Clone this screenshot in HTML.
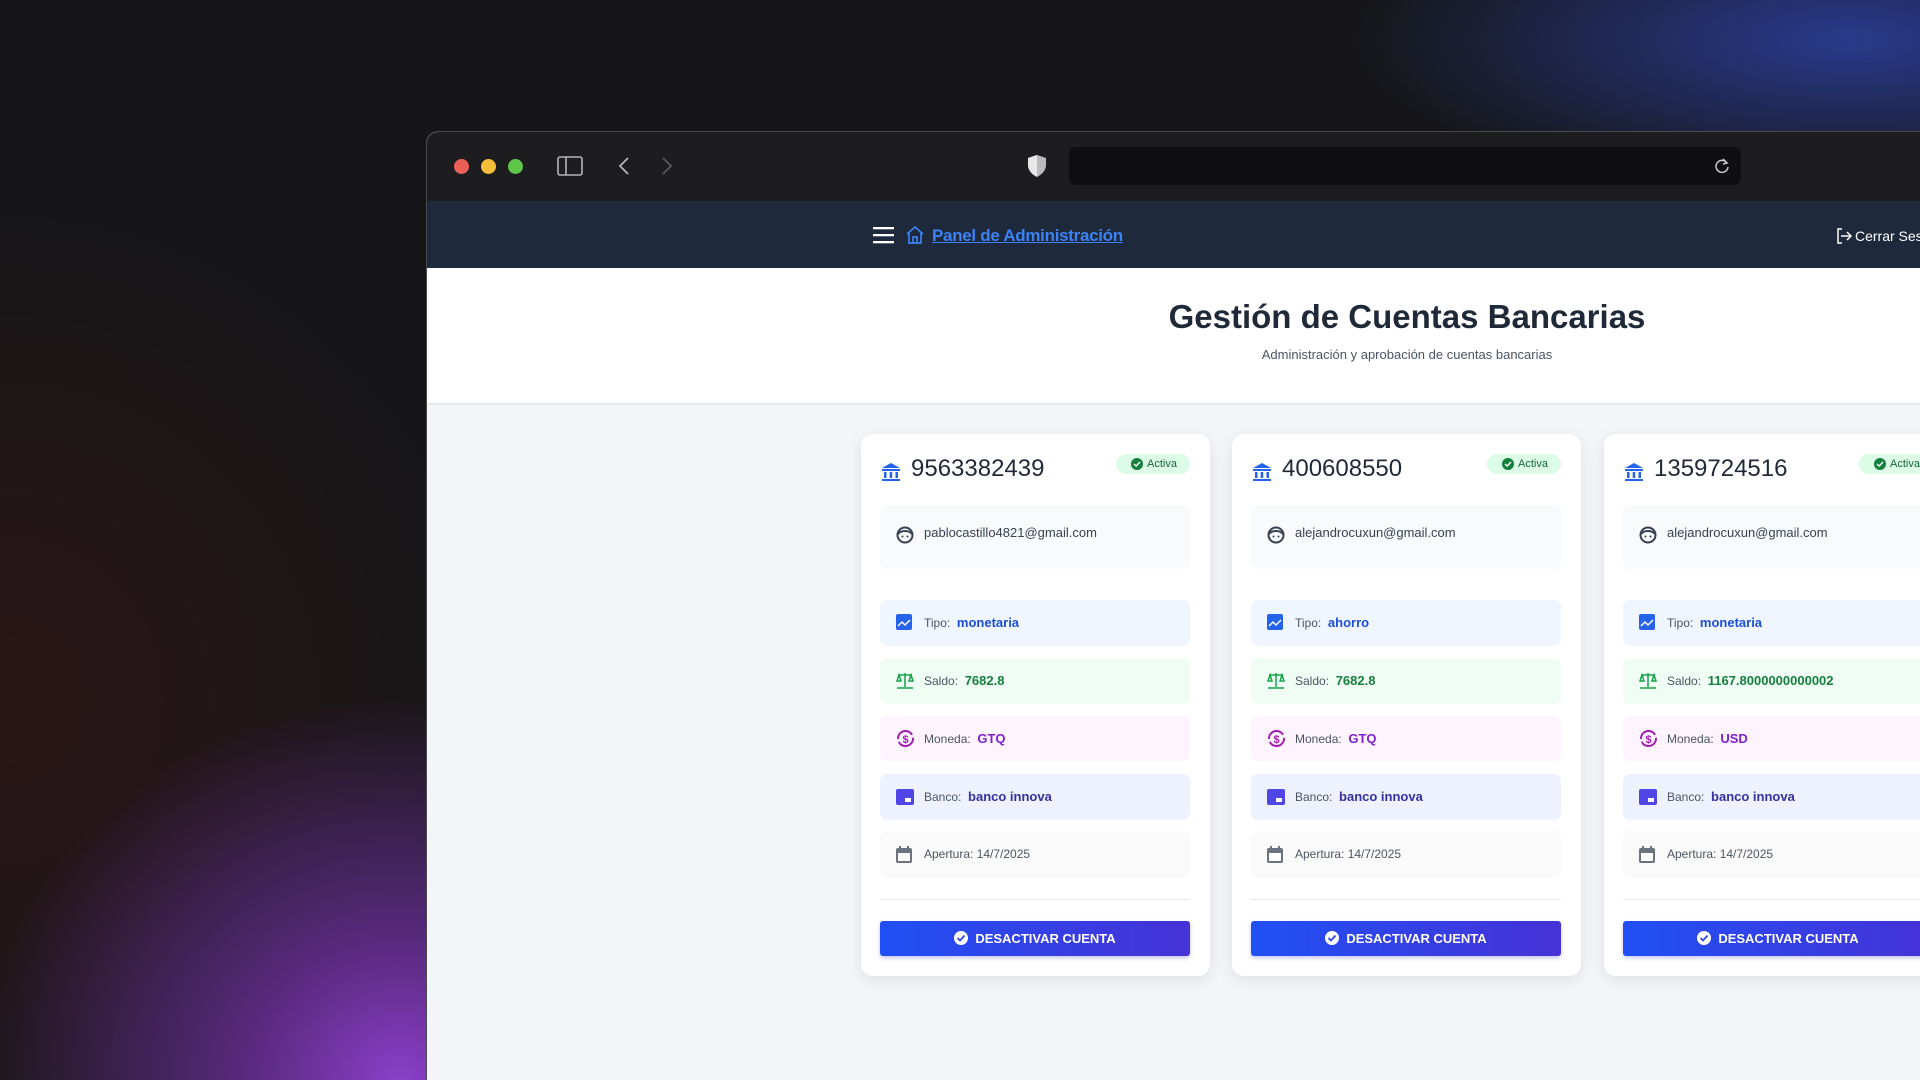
<!DOCTYPE html>
<html><head><meta charset="utf-8"><style>
*{margin:0;padding:0;box-sizing:border-box}
html{width:1920px;height:1080px;overflow:hidden}
body{width:1920px;height:1080px;overflow:hidden;position:relative;font-family:"Liberation Sans",sans-serif;
background:radial-gradient(ellipse 420px 380px at 400px 1080px,#8a3fc8 0%,#5a2a80 35%,rgba(40,20,50,0) 100%),radial-gradient(ellipse 500px 160px at 1850px 40px,#283a8c 0%,rgba(30,30,80,0) 100%),radial-gradient(ellipse 500px 500px at 0px 700px,#2a1516 0%,rgba(0,0,0,0) 100%),#161618;}
.win{position:absolute;left:426px;top:131px;width:1494px;height:949px;border-radius:12px 0 0 0;overflow:hidden;border:1px solid #4a4a4e;border-right:none;border-bottom:none;background:#f3f5f9}
.tb{position:absolute;left:0;top:0;right:0;height:69px;background:#1d1d20}
.dot{position:absolute;top:27px;width:15px;height:15px;border-radius:50%}
.url{position:absolute;left:642px;top:15px;width:672px;height:38px;border-radius:7px;background:#0f0f11}
.nav{position:absolute;left:0;top:69px;right:0;height:67px;background:#1e293b}
.hdr{position:absolute;left:0;top:136px;right:0;height:137px;background:#fff;border-bottom:2px solid #e5e7eb}
.h1{position:absolute;left:0;width:1960px;text-align:center;top:30px;font-size:33px;font-weight:bold;color:#1f2937}
.sub{position:absolute;left:0;width:1960px;text-align:center;top:79px;font-size:13px;color:#4b5563}
.card{position:absolute;top:302px;width:349px;height:542px;background:#fff;border-radius:12px;box-shadow:0 4px 16px rgba(0,0,0,.09)}
.num{position:absolute;left:50px;top:21px;font-size:24px;color:#1f2937}
.bank{position:absolute;left:20px;top:28px}
.badge{position:absolute;left:255px;top:20px;width:74px;height:20px;border-radius:10px;background:#dcfce7;font-size:11px;color:#166534;padding:4px 0 0 31px}
.badge svg{position:absolute;left:15px;top:4px}
.row{position:absolute;left:19px;width:310px;border-radius:7px;font-size:12px;color:#4b5563}
.row svg{position:absolute;left:16px}
.row span{position:absolute;left:44px}
.row b{font-size:13px}
.btn{position:absolute;left:19px;top:487px;width:310px;height:35px;border-radius:3px;background:linear-gradient(90deg,#2050f5,#4632d6);box-shadow:0 2px 4px rgba(60,60,200,.3);color:#fff;font-size:13px;font-weight:bold;text-align:center;line-height:35px}
.btn svg{vertical-align:-2px;margin-right:7px}
</style></head><body>
<div class="win">
 <div class="tb">
  <div class="dot" style="left:27px;background:#ec5f57"></div>
  <div class="dot" style="left:54px;background:#f4bd3a"></div>
  <div class="dot" style="left:81px;background:#5fc649"></div>
  <svg style="position:absolute;left:130px;top:24px" width="26" height="20" viewBox="0 0 26 20"><rect x="1" y="1" width="24" height="18" rx="2" fill="none" stroke="#b5b5b8" stroke-width="1.6"/><line x1="9" y1="1" x2="9" y2="19" stroke="#b5b5b8" stroke-width="1.6"/></svg>
  <svg style="position:absolute;left:190px;top:24px" width="14" height="20"><path d="M11 2 L3 10 L11 18" fill="none" stroke="#b5b5b8" stroke-width="1.8"/></svg>
  <svg style="position:absolute;left:233px;top:24px" width="14" height="20"><path d="M3 2 L11 10 L3 18" fill="none" stroke="#5a5a5e" stroke-width="1.8"/></svg>
  <svg style="position:absolute;left:600px;top:22px" width="20" height="24" viewBox="0 0 20 24"><path d="M10 1 L19 4 V11 C19 17 14 21 10 23 C6 21 1 17 1 11 V4 Z" fill="#bbb"/><path d="M10 1 L1 4 V11 C1 17 6 21 10 23 Z" fill="#e8e8e8"/></svg>
  <div class="url"><svg style="position:absolute;right:10px;top:10px" width="18" height="18" viewBox="0 0 18 18"><path d="M14 6 A6 6 0 1 0 15 10" fill="none" stroke="#ccc" stroke-width="1.5"/><path d="M10 2 L14 6 L10 7" fill="none" stroke="#ccc" stroke-width="1.5"/></svg></div>
 </div>
 <div class="nav">
  <svg style="position:absolute;left:446px;top:25px" width="21" height="18"><rect y="1" width="21" height="2.3" fill="#fff"/><rect y="8" width="21" height="2.3" fill="#fff"/><rect y="15" width="21" height="2.3" fill="#fff"/></svg>
  <svg style="position:absolute;left:478px;top:24px" width="20" height="20" viewBox="0 0 20 20"><path d="M2 9 L10 2 L18 9 M4 8 V18 H16 V8 M8 18 V12 H12 V18" fill="none" stroke="#3b82f6" stroke-width="1.7"/></svg>
  <div style="position:absolute;left:505px;top:25px;font-size:17px;font-weight:bold;color:#3b82f6;text-decoration:underline;letter-spacing:-0.3px">Panel de Administración</div>
  <svg style="position:absolute;left:1409px;top:27px" width="16" height="16" viewBox="0 0 16 16"><path d="M6 1 H2 V15 H6 M5 8 H15 M11 4 L15 8 L11 12" fill="none" stroke="#fff" stroke-width="1.5"/></svg>
  <div style="position:absolute;left:1428px;top:27px;font-size:14px;color:#fff;white-space:nowrap">Cerrar Sesión</div>
 </div>
 <div class="hdr">
  <div class="h1">Gestión de Cuentas Bancarias</div>
  <div class="sub">Administración y aprobación de cuentas bancarias</div>
 </div>
 <div class="card" style="left:434px">
  <svg class="bank" width="20" height="20" viewBox="0 0 20 20"><path d="M10 1 L19 6 H1 Z" fill="#2563eb"/><rect x="1" y="7" width="18" height="2" fill="#2563eb"/><rect x="3" y="10" width="2.5" height="6" fill="#2563eb"/><rect x="8.7" y="10" width="2.5" height="6" fill="#2563eb"/><rect x="14.5" y="10" width="2.5" height="6" fill="#2563eb"/><rect x="1" y="17" width="18" height="2" fill="#2563eb"/></svg>
  <div class="num">9563382439</div>
  <div class="badge"><svg width="12" height="12" viewBox="0 0 12 12"><circle cx="6" cy="6" r="6" fill="#15803d"/><path d="M3 6 L5.2 8 L9 4" fill="none" stroke="#fff" stroke-width="1.5"/></svg>Activa</div>
  <div class="row" style="top:71px;height:64px;background:#f9fafb"><svg style="top:21px" width="18" height="18" viewBox="0 0 18 18"><circle cx="9" cy="9" r="7.5" fill="none" stroke="#374151" stroke-width="2"/><path d="M2 8 C5 4 13 4 16 8" fill="none" stroke="#374151" stroke-width="2"/><circle cx="6.5" cy="10.5" r="1" fill="#374151"/><circle cx="11.5" cy="10.5" r="1" fill="#374151"/></svg><span style="top:20px;font-size:13px;color:#374151">pablocastillo4821@gmail.com</span></div>
  <div class="row" style="top:166px;height:46px;background:#eff6ff"><svg style="top:14px" width="16" height="16"><rect width="16" height="16" rx="2" fill="#2563eb"/><path d="M2 12 L6 8 L9 11 L14 6" fill="none" stroke="#fff" stroke-width="1.5"/></svg><span style="top:15px">Tipo:&nbsp; <b style="color:#1d4ed8">monetaria</b></span></div>
  <div class="row" style="top:224px;height:46px;background:#f0fdf4"><svg style="top:14px" width="18" height="17" viewBox="0 0 18 17"><path d="M9 1 V15 M2 3 H16 M1 16 H17 M1 9 L3 3 L5 9 Z M13 9 L15 3 L17 9 Z" fill="none" stroke="#16a34a" stroke-width="1.5"/></svg><span style="top:15px">Saldo:&nbsp; <b style="color:#15803d">7682.8</b></span></div>
  <div class="row" style="top:282px;height:45px;background:#fdf4ff"><svg style="top:13px" width="19" height="19" viewBox="0 0 19 19"><circle cx="9.5" cy="9.5" r="7.5" fill="none" stroke="#a21caf" stroke-width="2" stroke-dasharray="20 3"/><text x="9.5" y="14" font-size="11" font-weight="bold" text-anchor="middle" fill="#a21caf" font-family="Liberation Sans">$</text></svg><span style="top:15px">Moneda:&nbsp; <b style="color:#7e22ce">GTQ</b></span></div>
  <div class="row" style="top:340px;height:46px;background:#eef2ff"><svg style="top:15px" width="18" height="16"><rect width="18" height="16" rx="2" fill="#4f46e5"/><rect x="9" y="9" width="6" height="4" fill="#fff"/></svg><span style="top:15px">Banco:&nbsp; <b style="color:#3730a3">banco innova</b></span></div>
  <div class="row" style="top:397px;height:47px;background:#fafafa"><svg style="top:15px" width="16" height="17"><rect y="2" width="16" height="15" rx="2" fill="#6b7280"/><rect x="2" y="7" width="12" height="8" fill="#fff"/><rect x="3" y="0" width="2" height="4" fill="#6b7280"/><rect x="11" y="0" width="2" height="4" fill="#6b7280"/></svg><span style="top:16px">Apertura: 14/7/2025</span></div>
  <div style="position:absolute;left:19px;top:465px;width:310px;height:1px;background:#e5e7eb"></div>
  <div class="btn"><svg width="14" height="14" viewBox="0 0 14 14"><circle cx="7" cy="7" r="7" fill="#fff"/><path d="M3.5 7 L6 9.5 L10.5 4.5" fill="none" stroke="#2f45e8" stroke-width="1.8"/></svg>DESACTIVAR CUENTA</div>
 </div>
 <div class="card" style="left:805px">
  <svg class="bank" width="20" height="20" viewBox="0 0 20 20"><path d="M10 1 L19 6 H1 Z" fill="#2563eb"/><rect x="1" y="7" width="18" height="2" fill="#2563eb"/><rect x="3" y="10" width="2.5" height="6" fill="#2563eb"/><rect x="8.7" y="10" width="2.5" height="6" fill="#2563eb"/><rect x="14.5" y="10" width="2.5" height="6" fill="#2563eb"/><rect x="1" y="17" width="18" height="2" fill="#2563eb"/></svg>
  <div class="num">400608550</div>
  <div class="badge"><svg width="12" height="12" viewBox="0 0 12 12"><circle cx="6" cy="6" r="6" fill="#15803d"/><path d="M3 6 L5.2 8 L9 4" fill="none" stroke="#fff" stroke-width="1.5"/></svg>Activa</div>
  <div class="row" style="top:71px;height:64px;background:#f9fafb"><svg style="top:21px" width="18" height="18" viewBox="0 0 18 18"><circle cx="9" cy="9" r="7.5" fill="none" stroke="#374151" stroke-width="2"/><path d="M2 8 C5 4 13 4 16 8" fill="none" stroke="#374151" stroke-width="2"/><circle cx="6.5" cy="10.5" r="1" fill="#374151"/><circle cx="11.5" cy="10.5" r="1" fill="#374151"/></svg><span style="top:20px;font-size:13px;color:#374151">alejandrocuxun@gmail.com</span></div>
  <div class="row" style="top:166px;height:46px;background:#eff6ff"><svg style="top:14px" width="16" height="16"><rect width="16" height="16" rx="2" fill="#2563eb"/><path d="M2 12 L6 8 L9 11 L14 6" fill="none" stroke="#fff" stroke-width="1.5"/></svg><span style="top:15px">Tipo:&nbsp; <b style="color:#1d4ed8">ahorro</b></span></div>
  <div class="row" style="top:224px;height:46px;background:#f0fdf4"><svg style="top:14px" width="18" height="17" viewBox="0 0 18 17"><path d="M9 1 V15 M2 3 H16 M1 16 H17 M1 9 L3 3 L5 9 Z M13 9 L15 3 L17 9 Z" fill="none" stroke="#16a34a" stroke-width="1.5"/></svg><span style="top:15px">Saldo:&nbsp; <b style="color:#15803d">7682.8</b></span></div>
  <div class="row" style="top:282px;height:45px;background:#fdf4ff"><svg style="top:13px" width="19" height="19" viewBox="0 0 19 19"><circle cx="9.5" cy="9.5" r="7.5" fill="none" stroke="#a21caf" stroke-width="2" stroke-dasharray="20 3"/><text x="9.5" y="14" font-size="11" font-weight="bold" text-anchor="middle" fill="#a21caf" font-family="Liberation Sans">$</text></svg><span style="top:15px">Moneda:&nbsp; <b style="color:#7e22ce">GTQ</b></span></div>
  <div class="row" style="top:340px;height:46px;background:#eef2ff"><svg style="top:15px" width="18" height="16"><rect width="18" height="16" rx="2" fill="#4f46e5"/><rect x="9" y="9" width="6" height="4" fill="#fff"/></svg><span style="top:15px">Banco:&nbsp; <b style="color:#3730a3">banco innova</b></span></div>
  <div class="row" style="top:397px;height:47px;background:#fafafa"><svg style="top:15px" width="16" height="17"><rect y="2" width="16" height="15" rx="2" fill="#6b7280"/><rect x="2" y="7" width="12" height="8" fill="#fff"/><rect x="3" y="0" width="2" height="4" fill="#6b7280"/><rect x="11" y="0" width="2" height="4" fill="#6b7280"/></svg><span style="top:16px">Apertura: 14/7/2025</span></div>
  <div style="position:absolute;left:19px;top:465px;width:310px;height:1px;background:#e5e7eb"></div>
  <div class="btn"><svg width="14" height="14" viewBox="0 0 14 14"><circle cx="7" cy="7" r="7" fill="#fff"/><path d="M3.5 7 L6 9.5 L10.5 4.5" fill="none" stroke="#2f45e8" stroke-width="1.8"/></svg>DESACTIVAR CUENTA</div>
 </div>
 <div class="card" style="left:1177px">
  <svg class="bank" width="20" height="20" viewBox="0 0 20 20"><path d="M10 1 L19 6 H1 Z" fill="#2563eb"/><rect x="1" y="7" width="18" height="2" fill="#2563eb"/><rect x="3" y="10" width="2.5" height="6" fill="#2563eb"/><rect x="8.7" y="10" width="2.5" height="6" fill="#2563eb"/><rect x="14.5" y="10" width="2.5" height="6" fill="#2563eb"/><rect x="1" y="17" width="18" height="2" fill="#2563eb"/></svg>
  <div class="num">1359724516</div>
  <div class="badge"><svg width="12" height="12" viewBox="0 0 12 12"><circle cx="6" cy="6" r="6" fill="#15803d"/><path d="M3 6 L5.2 8 L9 4" fill="none" stroke="#fff" stroke-width="1.5"/></svg>Activa</div>
  <div class="row" style="top:71px;height:64px;background:#f9fafb"><svg style="top:21px" width="18" height="18" viewBox="0 0 18 18"><circle cx="9" cy="9" r="7.5" fill="none" stroke="#374151" stroke-width="2"/><path d="M2 8 C5 4 13 4 16 8" fill="none" stroke="#374151" stroke-width="2"/><circle cx="6.5" cy="10.5" r="1" fill="#374151"/><circle cx="11.5" cy="10.5" r="1" fill="#374151"/></svg><span style="top:20px;font-size:13px;color:#374151">alejandrocuxun@gmail.com</span></div>
  <div class="row" style="top:166px;height:46px;background:#eff6ff"><svg style="top:14px" width="16" height="16"><rect width="16" height="16" rx="2" fill="#2563eb"/><path d="M2 12 L6 8 L9 11 L14 6" fill="none" stroke="#fff" stroke-width="1.5"/></svg><span style="top:15px">Tipo:&nbsp; <b style="color:#1d4ed8">monetaria</b></span></div>
  <div class="row" style="top:224px;height:46px;background:#f0fdf4"><svg style="top:14px" width="18" height="17" viewBox="0 0 18 17"><path d="M9 1 V15 M2 3 H16 M1 16 H17 M1 9 L3 3 L5 9 Z M13 9 L15 3 L17 9 Z" fill="none" stroke="#16a34a" stroke-width="1.5"/></svg><span style="top:15px">Saldo:&nbsp; <b style="color:#15803d">1167.8000000000002</b></span></div>
  <div class="row" style="top:282px;height:45px;background:#fdf4ff"><svg style="top:13px" width="19" height="19" viewBox="0 0 19 19"><circle cx="9.5" cy="9.5" r="7.5" fill="none" stroke="#a21caf" stroke-width="2" stroke-dasharray="20 3"/><text x="9.5" y="14" font-size="11" font-weight="bold" text-anchor="middle" fill="#a21caf" font-family="Liberation Sans">$</text></svg><span style="top:15px">Moneda:&nbsp; <b style="color:#7e22ce">USD</b></span></div>
  <div class="row" style="top:340px;height:46px;background:#eef2ff"><svg style="top:15px" width="18" height="16"><rect width="18" height="16" rx="2" fill="#4f46e5"/><rect x="9" y="9" width="6" height="4" fill="#fff"/></svg><span style="top:15px">Banco:&nbsp; <b style="color:#3730a3">banco innova</b></span></div>
  <div class="row" style="top:397px;height:47px;background:#fafafa"><svg style="top:15px" width="16" height="17"><rect y="2" width="16" height="15" rx="2" fill="#6b7280"/><rect x="2" y="7" width="12" height="8" fill="#fff"/><rect x="3" y="0" width="2" height="4" fill="#6b7280"/><rect x="11" y="0" width="2" height="4" fill="#6b7280"/></svg><span style="top:16px">Apertura: 14/7/2025</span></div>
  <div style="position:absolute;left:19px;top:465px;width:310px;height:1px;background:#e5e7eb"></div>
  <div class="btn"><svg width="14" height="14" viewBox="0 0 14 14"><circle cx="7" cy="7" r="7" fill="#fff"/><path d="M3.5 7 L6 9.5 L10.5 4.5" fill="none" stroke="#2f45e8" stroke-width="1.8"/></svg>DESACTIVAR CUENTA</div>
 </div>
</div>
</body></html>
